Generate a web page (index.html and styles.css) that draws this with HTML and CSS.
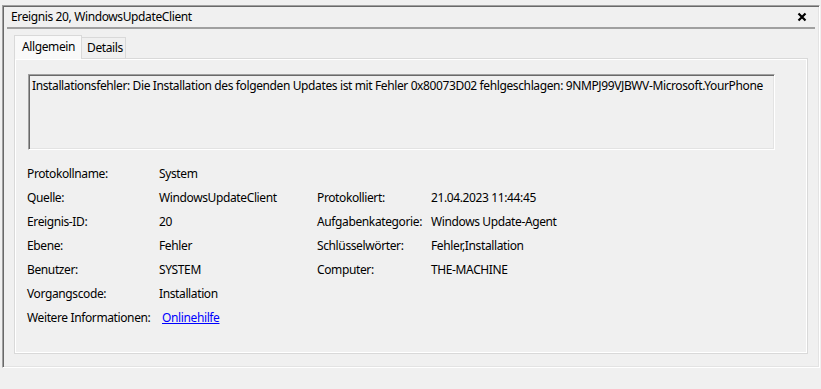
FILE: index.html
```html
<!DOCTYPE html>
<html lang="de">
<head>
    <meta charset="UTF-8">
    <title>Ereignis 20, WindowsUpdateClient</title>
    <link rel="stylesheet" href="styles.css">
</head>
<body>

    <div class="window">
        <div class="titlebar">
            <span>Ereignis 20, WindowsUpdateClient</span>
            <svg class="close" width="10" height="10" viewBox="0 0 10 10">
                <path d="M1.5 1.5 L8.5 8.5 M8.5 1.5 L1.5 8.5" stroke="#000" stroke-width="2.2" fill="none"/>
            </svg>
        </div>

        <!-- Tabs -->
        <div class="tabs">
            <div class="tab active">Allgemein</div>
            <div class="tab">Details</div>
        </div>

        <div class="panel">
            <div class="message">Installationsfehler: Die Installation des folgenden Updates ist mit Fehler 0x80073D02 fehlgeschlagen: 9NMPJ99VJBWV-Microsoft.YourPhone</div>

            <div class="details">
                <span>Protokollname:</span><span>System</span><span></span><span></span>
                <span>Quelle:</span><span>WindowsUpdateClient</span><span>Protokolliert:</span><span>21.04.2023 11:44:45</span>
                <span>Ereignis-ID:</span><span>20</span><span>Aufgabenkategorie:</span><span>Windows Update-Agent</span>
                <span>Ebene:</span><span>Fehler</span><span>Schlüsselwörter:</span><span>Fehler,Installation</span>
                <span>Benutzer:</span><span>SYSTEM</span><span>Computer:</span><span>THE-MACHINE</span>
                <span>Vorgangscode:</span><span>Installation</span><span></span><span></span>
                <span>Weitere Informationen:</span><span><a href="#" class="link">Onlinehilfe</a></span><span></span><span></span>
            </div>
        </div>
    </div>

</body>
</html>
```

FILE: styles.css
```css
body {
    margin: 0;
    background-color: #f0f0f0;
    font-family: "Noto Sans", sans-serif;
    font-size: 12px;
    letter-spacing: -0.38px;
    color: #000;
}

/* Outer sunken frame */
.window {
    box-sizing: border-box;
    height: 363px;
    margin: 5px 1px 0 2px;
    padding: 0 11px;
    border-style: solid;
    border-width: 1px;
    border-color: #a0a0a0 #fff #fff #a0a0a0;
    box-shadow: inset 1px 1px #696969, inset -1px -1px #e3e3e3;
}

.titlebar {
    display: flex;
    justify-content: space-between;
    align-items: center;
    height: 21px;
    margin: 0 -7px;
    padding: 0 8px 0 4px;
    border-bottom: 2px solid #a0a0a0;
}

.close {
    display: block;
}

.tabs {
    display: flex;
    align-items: flex-end;
    height: 23px;
    margin-top: 6px;
}

.tab {
    box-sizing: border-box;
    height: 21px;
    width: 44px;
    line-height: 20px;
    padding-left: 5px;
    border: 1px solid #d9d9d9;
    border-bottom: none;
    border-left: none;
    background-color: #f0f0f0;
}

.tab.active {
    position: relative;
    z-index: 1;
    height: 24px;
    width: 68px;
    margin-bottom: -1px;
    padding-left: 7px;
    line-height: 21px;
    border-left: 1px solid #d9d9d9;
    background-color: #f9f9f9;
}

.panel {
    box-sizing: border-box;
    height: 296px;
    padding: 15px 32px 0 13px;
    border: 1px solid #d9d9d9;
    box-shadow: inset 0 0 0 1px #fff;
}

/* Sunken read-only text box */
.message {
    box-sizing: border-box;
    height: 76px;
    padding: 4px 3px;
    line-height: 14px;
    border-style: solid;
    border-width: 1px;
    border-color: #a0a0a0 #fff #fff #a0a0a0;
    box-shadow: inset 1px 1px #696969, inset -1px -1px #e3e3e3;
    white-space: nowrap;
    overflow: hidden;
}

.details {
    display: grid;
    grid-template-columns: 132px 158px 114px auto;
    grid-auto-rows: 24px;
    align-items: center;
    margin: 11px 0 0 -1px;
}

.link {
    padding-left: 3px;
    color: #0000ff;
}
```
